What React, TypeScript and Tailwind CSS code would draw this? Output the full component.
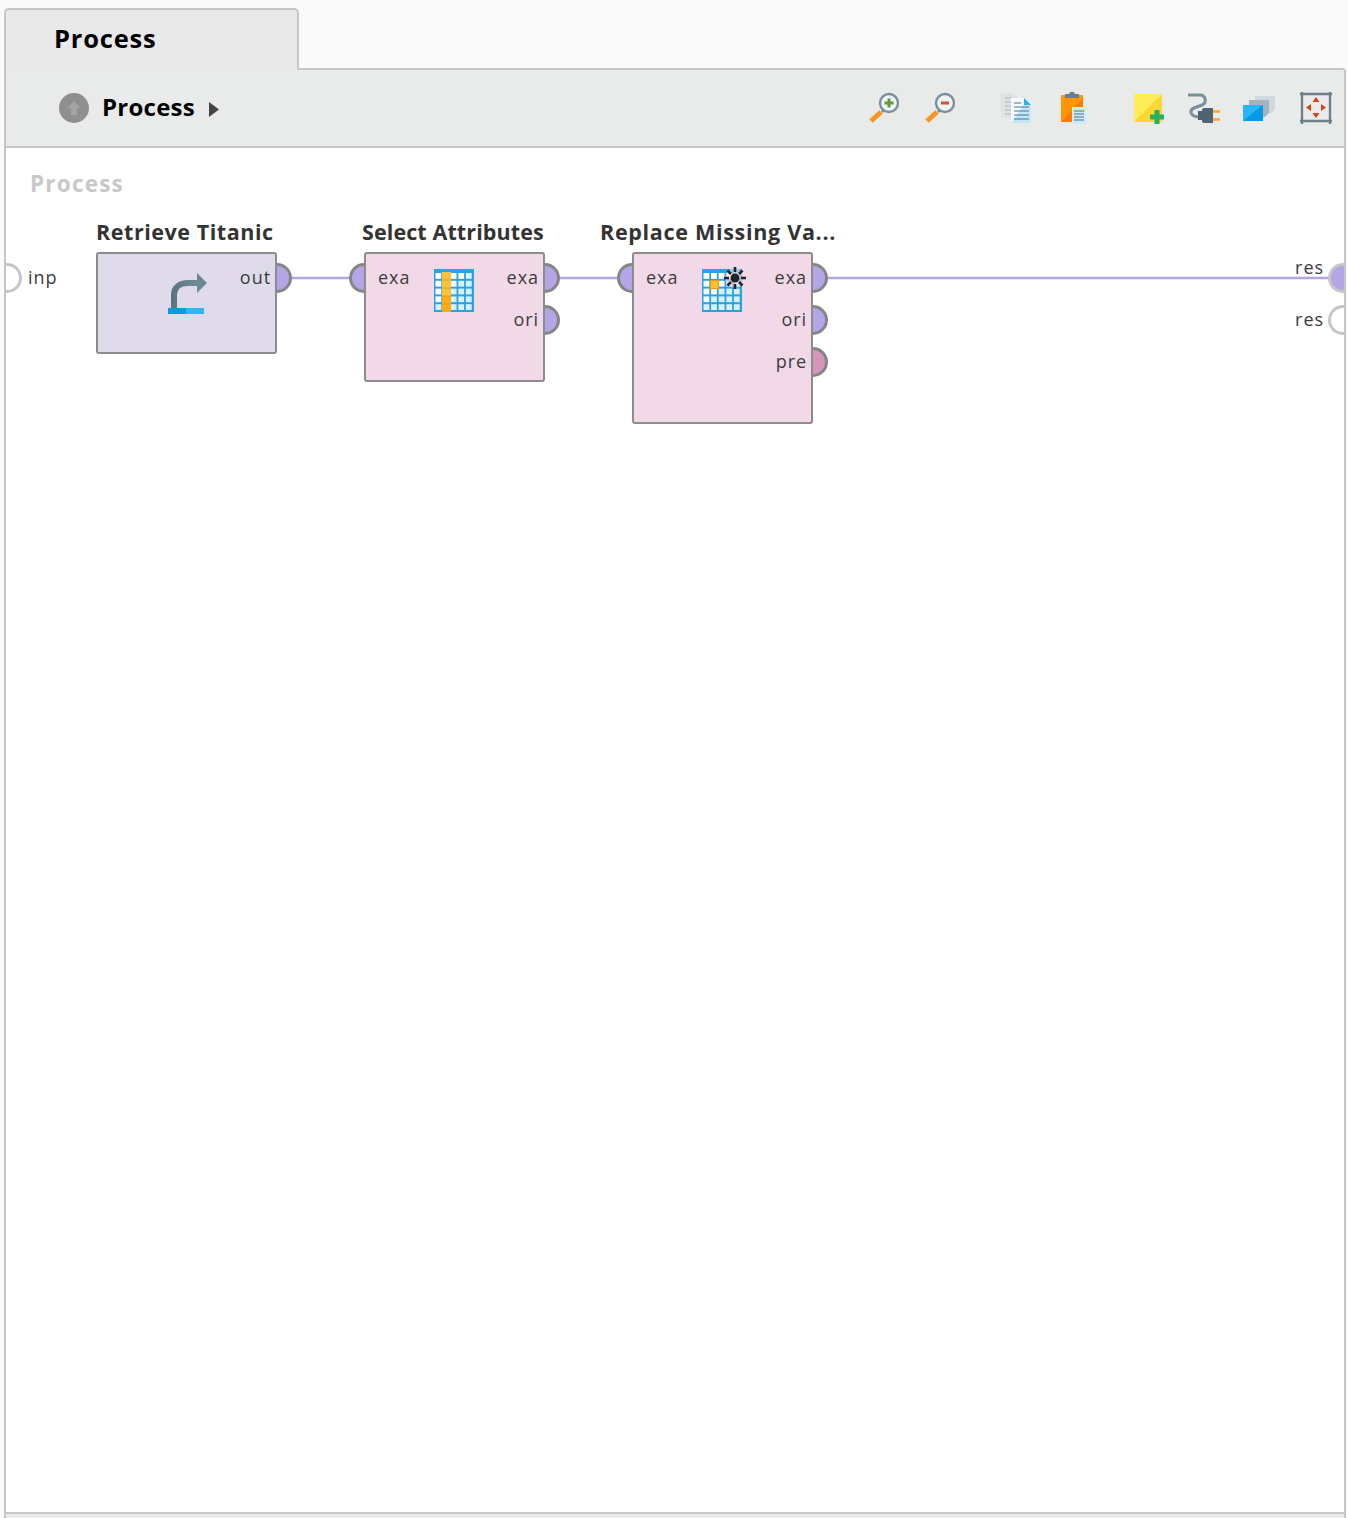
import type { ReactNode } from 'react';

const font = "[font-family:'Open_Sans',sans-serif]";

type Port = { label: string; fill: 'violet' | 'pink' };

const portFill = { violet: 'bg-[#b3a5e6]', pink: 'bg-[#d796bd]' };

// half-round port stuck on the right edge of an operator
const RightPort = ({ label, fill }: Port) => (
  <div className="flex h-[42px] items-center justify-end">
    <span className="-mt-[2px] pr-[6px] text-[18px] tracking-[0.95px] text-[#3c3c3c]">{label}</span>
    <div className={`-mr-[17px] h-[30px] w-[15px] rounded-r-full border-[3px] border-l-0 border-[#858585] ${portFill[fill]}`} />
  </div>
);

const LeftPort = ({ label }: { label: string }) => (
  <div className="flex h-[42px] items-center">
    <div className="-ml-[17px] h-[30px] w-[15px] rounded-l-full border-[3px] border-r-0 border-[#858585] bg-[#b3a5e6]" />
    <span className="-mt-[2px] pl-[14px] text-[18px] tracking-[0.95px] text-[#3c3c3c]">{label}</span>
  </div>
);

const Operator = ({
  title,
  titleClass,
  className,
  tint,
  input,
  outputs,
  icon,
  iconClass,
}: {
  title: string;
  titleClass: string;
  className: string;
  tint: string;
  input?: string;
  outputs: Port[];
  icon: ReactNode;
  iconClass: string;
}) => (
  <div className={`absolute w-[181px] ${className}`}>
    <div className={`absolute -top-[35px] whitespace-nowrap text-[21.5px] font-bold leading-[30px] text-[#333] ${titleClass}`}>
      {title}
    </div>
    <div className={`relative h-full rounded-[3px] border-2 border-[#8c8c8c] py-[3px] ${tint}`}>
      <div className={`absolute ${iconClass}`}>{icon}</div>
      <div className="flex justify-between">
        <div>{input && <LeftPort label={input} />}</div>
        <div>
          {outputs.map((p, i) => (
            <RightPort key={i} {...p} />
          ))}
        </div>
      </div>
    </div>
  </div>
);

const ZoomIcon = ({ minus }: { minus?: boolean }) => (
  <svg width="32" height="32" viewBox="0 0 32 32">
    <path d="M14 18l2 2" stroke="#78909c" strokeWidth="3" />
    <path d="M3 29 13 20" stroke="#f7931e" strokeWidth="5" />
    <circle cx="21" cy="11" r="9" fill="#f0f3f3" stroke="#78909c" strokeWidth="2.4" />
    {minus ? (
      <rect x="17" y="9.500" width="8" height="3" fill="#d4532b" />
    ) : (
      <path d="M21 6.500v9M16.500 11h9" stroke="#5f9a3c" strokeWidth="3" />
    )}
  </svg>
);

const CopyIcon = () => (
  <svg width="32" height="34" viewBox="0 0 32 34">
    <path d="M0 2h12l6 6v19H0z" fill="#dfe3e4" />
    <path d="M4 7h7M4 11h7M4 15h7M4 19h7M4 23h7" stroke="#aeb8bd" strokeWidth="1.200" />
    <path d="M10 7h13l7 7v18H10z" fill="#bfe6fb" />
    <path d="M10 7h13v6L10 32z" fill="#f4fbff" />
    <path d="M23 7l7 7h-7z" fill="#29aef2" />
    <path d="M13 12h7M13 16h15M13 20h15M13 24h15M13 28h15" stroke="#4f7385" strokeWidth="1.200" />
  </svg>
);

const PasteIcon = () => (
  <svg width="26" height="34" viewBox="0 0 26 34">
    <path d="M0 4h22v27H0z" fill="#ff7a00" />
    <path d="M22 4v3L0 31V4z" fill="#ff9500" />
    <path d="M4 3h4l1-2h4l1 2h4v4H4z" fill="#6d7f8a" />
    <rect x="11" y="16" width="14" height="17" fill="#c9ebfb" />
    <path d="M13 20h10M13 23h10M13 26h10M13 29h10" stroke="#4f7385" strokeWidth="1.100" />
  </svg>
);

const NoteIcon = () => (
  <svg width="32" height="32" viewBox="0 0 32 32">
    <path d="M0 2h28v28H0z" fill="#fdd835" />
    <path d="M0 2h28L0 30z" fill="#ffee58" />
    <path d="M23 18v14M16 25h14" stroke="#27ae60" strokeWidth="5" />
  </svg>
);

const PlugIcon = () => (
  <svg width="33" height="32" viewBox="0 0 33 32">
    <path d="M0 3h12c6 0 7 8 2 10l-8 3c-5 2-4 8 4 9" fill="none" stroke="#78909c" strokeWidth="3" />
    <path d="M10 19h4v-1c0-1 1-2 2-2h9v15h-9c-1 0-2-1-2-2v-1h-4z" fill="#4e6473" />
    <path d="M25 19.500h7M25 27.500h7" stroke="#f9a825" strokeWidth="2.400" />
  </svg>
);

const LayersIcon = () => (
  <svg width="34" height="28" viewBox="0 0 34 28">
    <path d="M12 2h20v13l-4 4H12z" fill="#cfd8dc" />
    <path d="M6 6h20v13l-4 4H6z" fill="#a3b4bc" />
    <path d="M0 11h20v16H0z" fill="#039be5" />
    <path d="M0 11h20L0 27z" fill="#29b6f6" />
  </svg>
);

const FitIcon = () => (
  <svg width="32" height="32" viewBox="0 0 32 32">
    <path d="M2 0v32M30 0v32M0 2h32M0 29h32" stroke="#6e808b" strokeWidth="2.400" fill="none" />
    <path d="M16 5l-3.500 5h7zM16 26l-3.500-5h7zM6 15.500l5-3.500v7zM26 15.500l-5-3.500v7z" fill="#d84315" />
  </svg>
);

const RetrieveIcon = () => (
  <svg width="39" height="41" viewBox="0 0 39 41">
    <defs>
      <linearGradient id="retrieveArrow" x1="3" y1="0" x2="36" y2="0" gradientUnits="userSpaceOnUse">
        <stop offset="0" stopColor="#5a7380" />
        <stop offset="1" stopColor="#78909c" />
      </linearGradient>
    </defs>
    <path d="M6 35V22C6 14 12 10 20 10h10" fill="none" stroke="url(#retrieveArrow)" strokeWidth="6" />
    <path d="M29 0l10 10-10 10z" fill="#6f8895" />
    <path d="M0 35h18v6H0z" fill="#0f9ad9" />
    <path d="M18 35h18v6H18z" fill="#35b5f0" />
  </svg>
);

const GridCells = () => {
  const cells = [];
  for (let r = 0; r < 5; r++) {
    for (let c = 0; c < 5; c++) {
      cells.push(
        <rect
          key={`${r}-${c}`}
          x={1.5 + c * 7.6}
          y={4 + r * 7.8}
          width="5.800"
          height="5.800"
          fill={c + r > 3 ? '#d6f1fc' : '#ffffff'}
        />,
      );
    }
  }
  return <>{cells}</>;
};

const SelectIcon = () => (
  <svg width="40" height="43" viewBox="0 0 40 43">
    <rect width="40" height="43" fill="#29a3e3" />
    <GridCells />
    <rect x="8" y="3" width="9" height="40" fill="#f8c33c" />
    <rect x="8" y="27" width="9" height="16" fill="#fbab16" />
    <path d="M8 11h9M8 19h9M8 27h9M8 35h9" stroke="#f59a00" strokeWidth="1.200" />
  </svg>
);

const ReplaceIcon = () => (
  <svg width="46" height="44" viewBox="0 0 46 44" className="overflow-visible">
    <g transform="translate(0 1)">
      <rect width="40" height="43" fill="#29a3e3" />
      <GridCells />
      <rect x="8.500" y="11.500" width="8" height="8" fill="#f8c33c" stroke="#f59a00" strokeWidth="1.200" />
    </g>
    <circle cx="33" cy="10" r="10" fill="#f1d9e7" opacity=".6" />
    <path
      d="M33 -1v5M33 16v5M22 10h5M39 10h5M25.500 2.500l3.500 3.500M37 14l3.500 3.500M25.500 17.500l3.500-3.500M37 6l3.500-3.500"
      stroke="#222"
      strokeWidth="2.600"
    />
    <circle cx="33" cy="10" r="4.500" fill="#222" />
  </svg>
);

export default function App() {
  return (
    <div className={`flex h-[1518px] w-full flex-col overflow-hidden bg-[#fafafa] ${font}`}>
      {/* Tab */}
      <div className="relative z-10 -mb-[2px] flex h-[70px] shrink-0 pl-1 pt-2">
        <div className="h-full w-[295px] rounded-t-[5px] border-x-2 border-t-2 border-[#c6c6c6] bg-[#e9e9e9] pl-[48px] pt-[10px] text-[25.500px] font-bold leading-[36px] tracking-[0.8px] text-black">
          Process
        </div>
      </div>

      <div className="mr-[2px] ml-1 flex flex-1 flex-col rounded-tr-[4px] border-x-2 border-t-2 border-[#c6c6c6]">
        {/* Toolbar */}
        <div className="flex h-[78px] shrink-0 items-center border-b-2 border-[#c6c6c6] bg-[#e9ebeb] pl-[53px]">
          <div className="flex h-[30px] w-[30px] items-center justify-center rounded-full bg-[#8f8f8f]">
            <svg width="18" height="18" viewBox="0 0 18 18">
              <path d="M9 2l7 7h-4v7H6V9H2z" fill="#a3a3a3" />
            </svg>
          </div>
          <span className="mb-[3px] ml-[13px] text-[24px] font-bold leading-none tracking-[0.25px] text-black">Process</span>
          <svg width="10" height="15" viewBox="0 0 10 15" className="mt-[3px] ml-[14px]">
            <path d="M0 0l10 7.500-10 7.500z" fill="#444" />
          </svg>

          <div className="mr-[12px] ml-auto flex items-center">
            <ZoomIcon />
            <div className="ml-6"><ZoomIcon minus /></div>
            <div className="ml-[45px]"><CopyIcon /></div>
            <div className="ml-[28px]"><PasteIcon /></div>
            <div className="ml-[47px]"><NoteIcon /></div>
            <div className="ml-[22px]"><PlugIcon /></div>
            <div className="ml-[22px]"><LayersIcon /></div>
            <div className="ml-[23px]"><FitIcon /></div>
          </div>
        </div>

        {/* Canvas */}
        <div className="relative flex-1 overflow-hidden bg-white">
          <div className="pl-[24px] pt-[21px] text-[22.500px] font-bold leading-[30px] tracking-[1.2px] text-[#c8c8c8]">Process</div>

          <svg className="absolute left-0 top-0 h-[200px] w-full">
            <path d="M285 130h60M553 130h60M821 130h510" stroke="#b3a5e6" strokeWidth="2.500" fill="none" />
          </svg>

          {/* process input / output ports */}
          <div className="absolute left-0 top-[115px] h-[30px] w-[16px] rounded-r-full border-[3px] border-l-0 border-[#c6c6c6] bg-white" />
          <span className="absolute left-[22px] top-[116px] text-[18px] tracking-[0.95px] text-[#3c3c3c]">inp</span>

          <span className="absolute right-[20px] top-[106px] text-[18px] tracking-[0.95px] text-[#3c3c3c]">res</span>
          <div className="absolute right-0 top-[115px] h-[30px] w-[16px] rounded-l-full border-[3px] border-r-0 border-[#c6c6c6] bg-[#b3a5e6]" />
          <span className="absolute right-[20px] top-[158px] text-[18px] tracking-[0.95px] text-[#3c3c3c]">res</span>
          <div className="absolute right-0 top-[157px] h-[30px] w-[16px] rounded-l-full border-[3px] border-r-0 border-[#c6c6c6] bg-white" />

          <Operator
            title="Retrieve Titanic"
            titleClass="left-0 tracking-[0.55px]"
            className="left-[90px] top-[104px] h-[102px]"
            tint="bg-[#dfdbeb]"
            outputs={[{ label: 'out', fill: 'violet' }]}
            icon={<RetrieveIcon />}
            iconClass="left-[70px] top-[19px]"
          />
          <Operator
            title="Select Attributes"
            titleClass="-left-[2px] tracking-[0.1px]"
            className="left-[358px] top-[104px] h-[130px]"
            tint="bg-[#f1d9e7]"
            input="exa"
            outputs={[
              { label: 'exa', fill: 'violet' },
              { label: 'ori', fill: 'violet' },
            ]}
            icon={<SelectIcon />}
            iconClass="left-[68px] top-[15px]"
          />
          <Operator
            title="Replace Missing Va..."
            titleClass="-left-[32px] tracking-[0.7px]"
            className="left-[626px] top-[104px] h-[172px]"
            tint="bg-[#f1d9e7]"
            input="exa"
            outputs={[
              { label: 'exa', fill: 'violet' },
              { label: 'ori', fill: 'violet' },
              { label: 'pre', fill: 'pink' },
            ]}
            icon={<ReplaceIcon />}
            iconClass="left-[68px] top-[14px]"
          />
        </div>

        {/* Bottom strip */}
        <div className="h-[6px] shrink-0 border-t-2 border-[#c6c6c6] bg-[#e9ebeb]" />
      </div>
    </div>
  );
}
